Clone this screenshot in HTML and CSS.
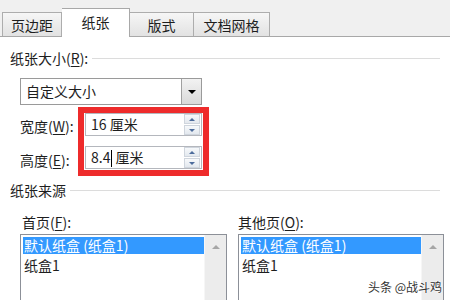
FILE: index.html
```html
<!DOCTYPE html>
<html lang="zh-CN">
<head>
  <meta charset="UTF-8">
  <title>页面设置 - 纸张</title>
  <link rel="stylesheet" href="styles.css">
</head>
<body>
  <div class="tabs">
    <div class="tab tab-margin">页边距</div>
    <div class="tab tab-paper active">纸张</div>
    <div class="tab tab-layout">版式</div>
    <div class="tab tab-grid">文档网格</div>
  </div>

  <div class="panel">
    <div class="group-title">纸张大小(<u>R</u>):</div>

    <div class="select">
      <span class="select-text">自定义大小</span>
      <span class="select-btn"><span class="tri-down"></span></span>
    </div>

    <div class="size-row">
      <div class="size-labels">
        <div class="size-label">宽度(<u>W</u>):</div>
        <div class="size-label">高度(<u>E</u>):</div>
      </div>
      <div class="mark-box">
        <div class="spin-input">
          <span class="spin-text">16 厘米</span>
          <span class="spin-btns">
            <span class="spin-btn"><span class="arr-up"></span></span>
            <span class="spin-btn"><span class="arr-down"></span></span>
          </span>
        </div>
        <div class="spin-input">
          <span class="spin-text">8.4<span class="caret"></span>厘米</span>
          <span class="spin-btns">
            <span class="spin-btn"><span class="arr-up"></span></span>
            <span class="spin-btn"><span class="arr-down"></span></span>
          </span>
        </div>
      </div>
    </div>

    <div class="group-title source-title">纸张来源</div>

    <div class="source-row">
      <div class="source-col">
        <div class="source-label first">首页(<u>F</u>):</div>
        <div class="listbox">
          <div class="list-items">
            <div class="item selected">默认纸盒 (纸盒1)</div>
            <div class="item">纸盒1</div>
          </div>
          <div class="scroll"><span class="scroll-up"></span></div>
        </div>
      </div>
      <div class="source-col">
        <div class="source-label">其他页(<u>O</u>):</div>
        <div class="listbox">
          <div class="list-items">
            <div class="item selected">默认纸盒 (纸盒1)</div>
            <div class="item">纸盒1</div>
          </div>
          <div class="scroll"><span class="scroll-up"></span></div>
        </div>
      </div>
    </div>
  </div>

  <div class="watermark">头条 @战斗鸡</div>
</body>
</html>
```

FILE: styles.css
```css
body {
  margin: 0;
  width: 450px;
  height: 300px;
  overflow: hidden;
  position: relative;
  background-color: #fff;
  color: #1e1e1e;
  font-family: "Noto Sans CJK SC", "Microsoft YaHei", sans-serif;
  font-size: 14px;
}

u {
  text-decoration-thickness: 1px;
  text-underline-offset: 2px;
}

/* tab strip */
.tabs {
  display: flex;
  align-items: flex-end;
  height: 36px;
  padding-left: 2px;
  background-color: #f0f0f0;
  border-bottom: 1px solid #a8a8a8;
}

.tab {
  display: flex;
  align-items: center;
  justify-content: center;
  box-sizing: border-box;
  height: 24px;
  border: 1px solid #adadad;
  border-bottom: none;
  background: linear-gradient(#f6f6f6, #e2e2e2);
  line-height: 20px;
}

.tab-margin { width: 60px; }
.tab-paper { width: 68px; }
.tab-layout { width: 64px; border-left: none; }
.tab-grid { width: 76px; border-left: none; }

.tab.active {
  height: 29px;
  margin-bottom: -1px;
  padding-bottom: 3px;
  background: #fff;
  border-color: #a8a8a8;
  border-left: none;
}

/* panel */
.panel {
  padding: 0 6px 0 10px;
}

.group-title {
  display: flex;
  align-items: center;
  margin-top: 11px;
  line-height: 20px;
  height: 20px;
}

.group-title::after {
  content: "";
  flex: 1;
  margin: 1px 4px 0 4px;
  border-top: 1px solid #dcdcdc;
}

.select {
  display: flex;
  box-sizing: border-box;
  width: 182px;
  height: 27px;
  margin: 10px 0 0 10px;
  border: 1px solid #9a9a9a;
}

.select-text {
  flex: 1;
  padding-left: 5px;
  line-height: 25px;
}

.select-btn {
  display: flex;
  align-items: center;
  justify-content: center;
  width: 19px;
  border-left: 1px solid #a0a0a0;
  background: linear-gradient(#f2f2f2, #d9d9d9);
}

.tri-down {
  width: 0;
  height: 0;
  border-left: 4px solid transparent;
  border-right: 4px solid transparent;
  border-top: 4px solid #000;
}

/* width / height */
.size-row {
  display: flex;
  margin-top: 2px;
  margin-left: 10px;
}

.size-labels {
  display: flex;
  flex-direction: column;
  gap: 11px;
  width: 58px;
  padding-top: 8px;
}

.size-label {
  height: 23px;
  line-height: 23px;
}

.mark-box {
  display: flex;
  flex-direction: column;
  gap: 10px;
  width: 117px;
  padding: 0 1px 1px 1px;
  border: 6px solid #ee2b2b;
}

.spin-input {
  display: flex;
  align-items: center;
  box-sizing: border-box;
  height: 23px;
  border: 1px solid #b4b7bd;
  background-color: #fff;
}

.spin-text {
  flex: 1;
  padding-left: 5px;
  line-height: 21px;
}

.caret {
  display: inline-block;
  width: 1px;
  height: 17px;
  margin: 0 3px 0 1px;
  vertical-align: -4px;
  background-color: #000;
}

.spin-btns {
  display: flex;
  flex-direction: column;
  gap: 1px;
  margin-right: 1px;
}

.spin-btn {
  display: flex;
  align-items: center;
  justify-content: center;
  box-sizing: border-box;
  width: 16px;
  height: 10px;
  border: 1px solid #cfd5dd;
  background: linear-gradient(#f7f9fb, #e3e8ee);
}

.arr-up,
.arr-down {
  width: 0;
  height: 0;
  border-left: 3px solid transparent;
  border-right: 3px solid transparent;
}

.arr-up { border-bottom: 3px solid #4d6c9c; }
.arr-down { border-top: 3px solid #4d6c9c; }

/* paper source */
.source-title {
  margin-top: 4px;
}

.source-row {
  display: flex;
  gap: 11px;
  margin-left: 10px;
}

.source-col {
  display: flex;
  flex-direction: column;
}

.source-col:first-child { width: 207px; }
.source-col:last-child { width: 206px; }

.source-label {
  margin-top: 12px;
  line-height: 20px;
}

.source-label.first {
  padding-left: 2px;
}

/* list box runs on below the frame, bottom edge hidden */
.listbox {
  display: flex;
  box-sizing: border-box;
  height: 66px;
  margin-top: 2px;
  border: 1px solid #8c9098;
  border-bottom: none;
}

.list-items {
  flex: 1;
  padding: 2px 0 0 2px;
}

.item {
  height: 19px;
  line-height: 19px;
  padding-left: 1px;
}

.item.selected {
  height: 17px;
  line-height: 17px;
  margin-bottom: 2px;
  background-color: #3399ff;
  color: #fff;
}

.scroll {
  display: flex;
  justify-content: center;
  width: 21px;
  background-color: #ececec;
  border-left: 1px solid #f6f6f6;
}

.scroll-up {
  width: 0;
  height: 0;
  margin-top: 10px;
  border-left: 4px solid transparent;
  border-right: 4px solid transparent;
  border-bottom: 4px solid #a6a6a6;
}

.watermark {
  position: absolute;
  right: 8px;
  bottom: 5px;
  font-size: 12px;
  color: #333;
  text-shadow: 0 0 2px #fff, 0 0 2px #fff;
}
```
